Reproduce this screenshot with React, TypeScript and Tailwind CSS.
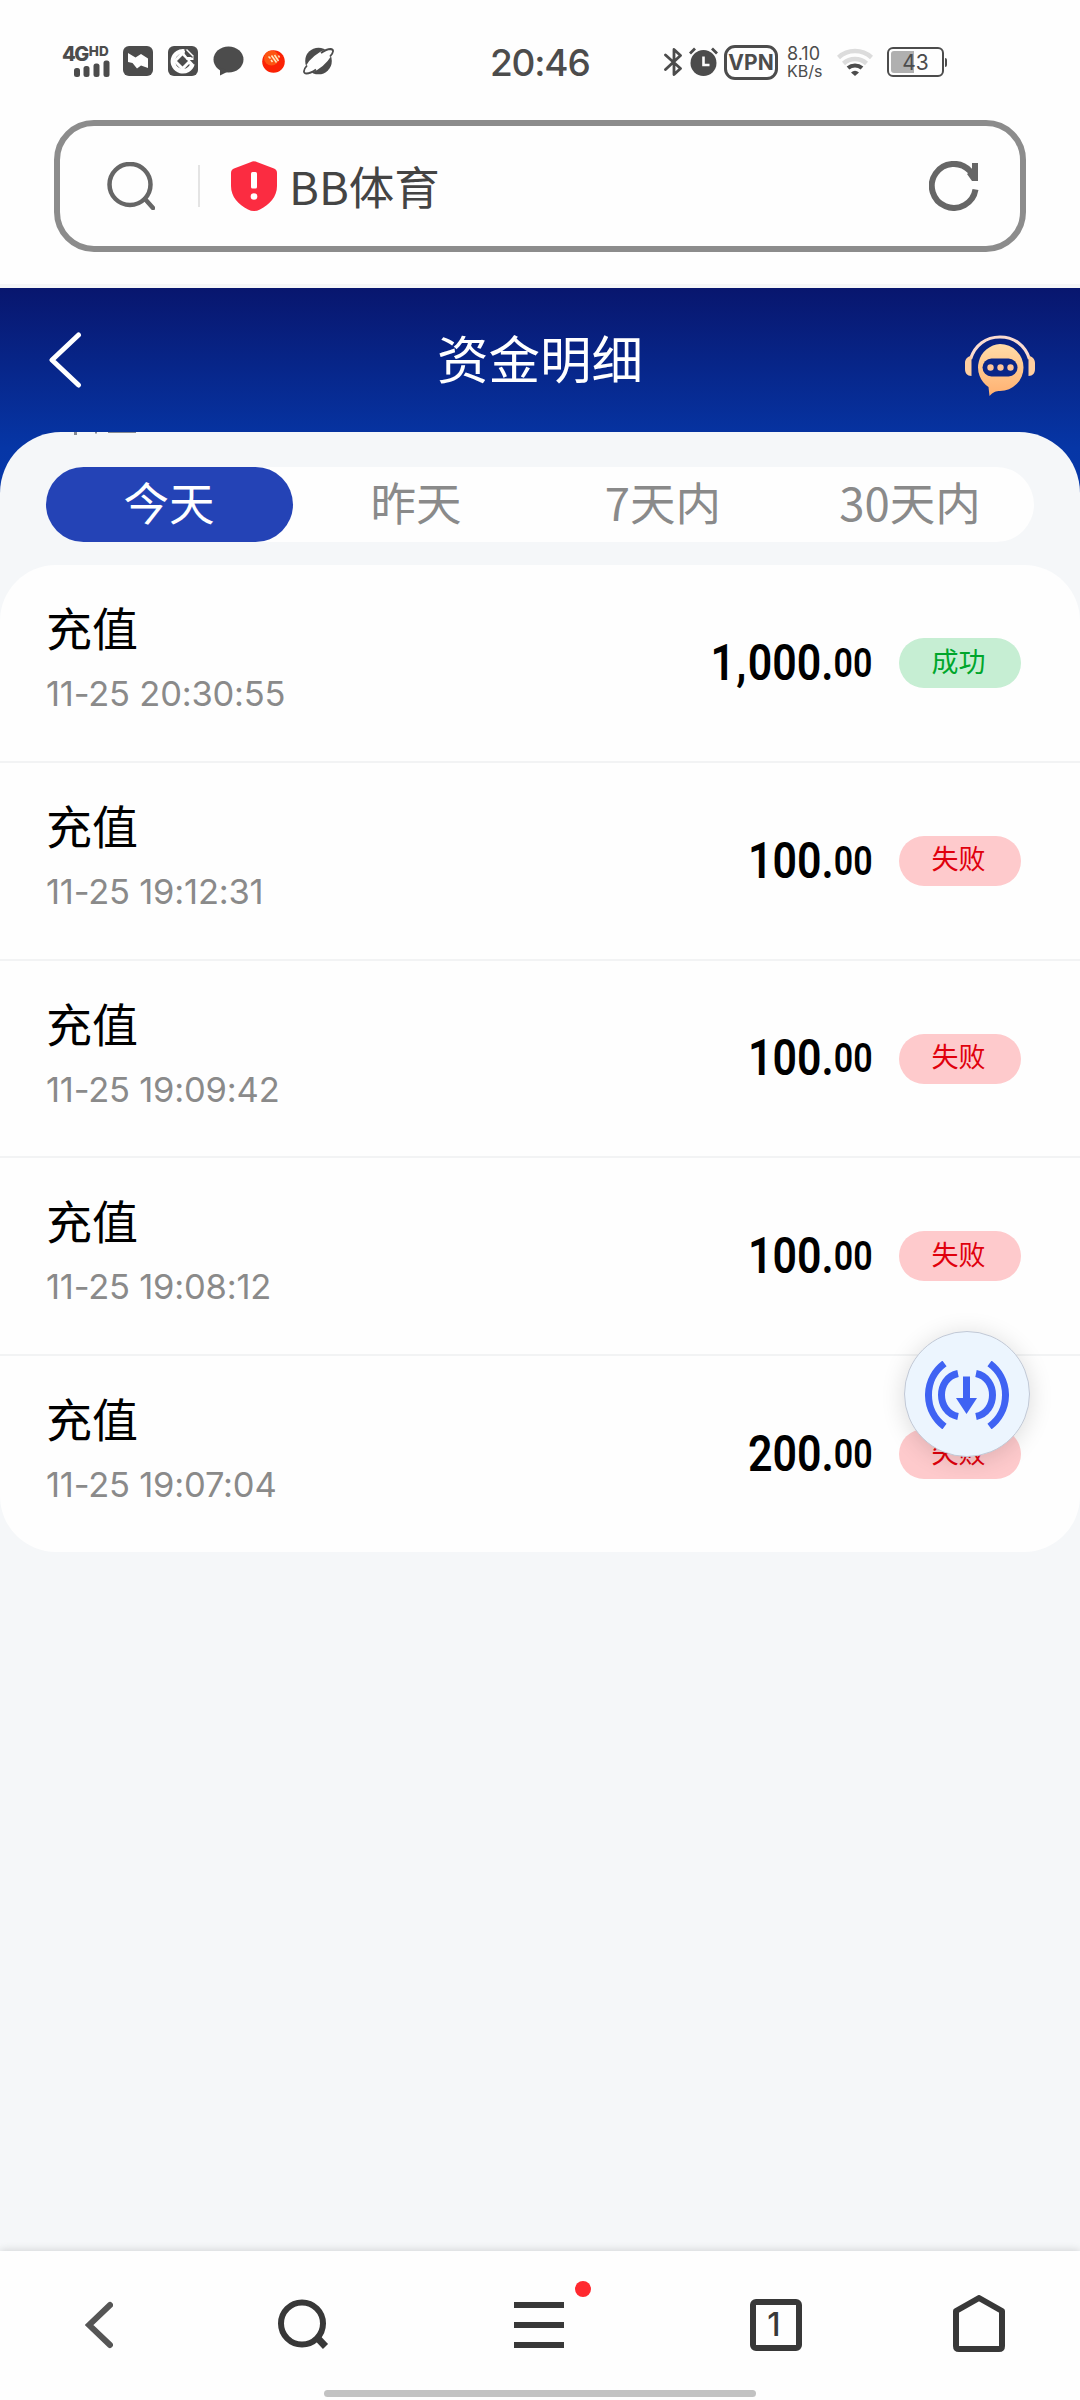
import { useState } from 'react';
import { clsx } from 'clsx';

type RecordStatus = 'success' | 'failed';

interface FundRecord {
  id: number;
  title: string;
  time: string;
  whole: string;
  cents: string;
  status: RecordStatus;
}

const records: FundRecord[] = [
  { id: 1, title: '充值', time: '11-25 20:30:55', whole: '1,000', cents: '00', status: 'success' },
  { id: 2, title: '充值', time: '11-25 19:12:31', whole: '100', cents: '00', status: 'failed' },
  { id: 3, title: '充值', time: '11-25 19:09:42', whole: '100', cents: '00', status: 'failed' },
  { id: 4, title: '充值', time: '11-25 19:08:12', whole: '100', cents: '00', status: 'failed' },
  { id: 5, title: '充值', time: '11-25 19:07:04', whole: '200', cents: '00', status: 'failed' },
];

const ranges = ['今天', '昨天', '7天内', '30天内'];

function SignalIcon() {
  return (
    <div className="flex h-8 w-12 flex-col">
      <div className="flex h-[15px] items-start gap-px font-extrabold">
        <span className="text-[20px] leading-[18px] tracking-[-1.5px]">4G</span>
        <span className="text-[13.5px] leading-[12px]">HD</span>
      </div>
      <svg width="36" height="17" viewBox="0 0 36 17" className="ml-3" fill="currentColor">
        <rect x="0" y="8" width="6" height="9" rx="2.5" />
        <rect x="9.5" y="6" width="6" height="11" rx="2.5" />
        <rect x="19.5" y="3.5" width="6" height="13.5" rx="2.5" />
        <rect x="29.5" y="0.5" width="6" height="16.5" rx="2.5" />
      </svg>
    </div>
  );
}

function NotificationIcons() {
  return (
    <div className="flex items-center">
      <svg width="30" height="30" viewBox="0 0 30 30">
        <rect width="30" height="30" rx="6" fill="currentColor" />
        <path d="M5 7l7.5 4.5L18 8l7 4.5V22l-7-2.5-4 3-4.500-5.500-4.500-1z" fill="#fefefe" />
      </svg>
      <svg width="30" height="30" viewBox="0 0 30 30" className="ml-[15px]" fill="none">
        <rect width="30" height="30" rx="6" fill="currentColor" />
        <path d="M17 5.500A10 10 0 1 0 24.500 18" stroke="#fefefe" strokeWidth="4.500" />
        <path d="M14.500 5L5 15l9.500 10 6-6.500H26L20 12z" fill="#fefefe" />
        <path d="M14.500 9.500l5.500 5.500-5.500 5.500L9 15z" fill="currentColor" />
        <path d="M18.500 12.500h7" stroke="#fefefe" strokeWidth="3" />
        <path d="M16.500 3.500l8 8" stroke="currentColor" strokeWidth="1.300" />
        <path d="M18.500 3.500l7 7" stroke="#fefefe" strokeWidth="1.500" />
      </svg>
      <svg width="31" height="30" viewBox="0 0 31 30" className="ml-[15px]">
        <ellipse cx="15.500" cy="13.500" rx="15" ry="13" fill="currentColor" />
        <path d="M7 21v8.500l8-4z" fill="currentColor" />
      </svg>
      <svg width="23" height="23" viewBox="0 0 23 23" className="ml-[18px]">
        <circle cx="11.500" cy="11.500" r="11.300" fill="#fb2205" />
        <circle cx="9.500" cy="8" r="7.500" fill="#fd5512" />
        <path d="M6.500 6.500l2 2M9.500 5.500l5 7M12.500 5l4 6M16.500 5.500l1 2M9 10l1.500 2" stroke="#ffe9c4" strokeWidth="1.500" fill="none" />
      </svg>
      <svg width="31" height="28" viewBox="0 0 31 28" className="ml-[18px]" fill="none">
        <circle cx="15.500" cy="14" r="13.300" fill="currentColor" />
        <ellipse cx="15.500" cy="14" rx="17" ry="6.500" transform="rotate(-40 15.500 14)" fill="#fefefe" />
        <path
          d="M4 18.500C0 23 0 26.500 3.500 26.500c3 0 6-1.500 9.500-4M27 9.500c4-4.500 4-7 .5-7.500-3 0-6 1.500-9.500 4"
          stroke="currentColor"
          strokeWidth="1.800"
        />
      </svg>
    </div>
  );
}

function BluetoothIcon() {
  return (
    <svg width="19" height="30" viewBox="0 0 19 30" fill="none" stroke="currentColor" strokeWidth="2.800">
      <path d="M1.500 8l15 13.500L10 27.500V2.500l6.500 6L1.500 22.500" strokeLinejoin="round" strokeLinecap="round" />
    </svg>
  );
}

function AlarmIcon() {
  return (
    <svg width="29" height="30" viewBox="0 0 29 30" fill="none">
      <circle cx="14.500" cy="16" r="13" fill="currentColor" />
      <path d="M1 6.500l5-5M28 6.500l-5-5" stroke="currentColor" strokeWidth="2.800" />
      <path d="M14.500 9.500v8.500h6" stroke="#fefefe" strokeWidth="2.600" />
    </svg>
  );
}

function WifiIcon() {
  return (
    <svg width="36" height="28" viewBox="0 0 36 28" fill="none" strokeWidth="4.500">
      <path d="M1.500 9.500a24.500 24.500 0 0 1 33 0" stroke="#dcdcdc" />
      <path d="M6.500 15.500a17 17 0 0 1 23 0" stroke="#dcdcdc" />
      <path d="M11 20a11 11 0 0 1 14 0" stroke="currentColor" strokeWidth="4.200" />
      <path d="M14 24.500q4-3.500 8 0L18 28z" fill="currentColor" />
    </svg>
  );
}

function Battery({ level }: { level: number }) {
  return (
    <div className="flex items-center gap-px">
      <div className="relative flex h-[30px] w-[57px] items-center justify-center rounded-[6px] border-2 border-[#4c4c4c]">
        <div className="absolute inset-y-[2px] left-[2px] rounded-l-[3px] bg-[#b0b0b0]" style={{ width: `${level}%` }} />
        <span className="relative text-[21px] leading-none">{level}</span>
      </div>
      <div className="h-[9px] w-[2px] rounded-r bg-[#4c4c4c]" />
    </div>
  );
}

function StatusBar() {
  return (
    <div className="flex h-[120px] items-start pt-[44px] text-[#4c4c4c]">
      <div className="flex w-[429px] items-center pt-px pl-[62px]">
        <SignalIcon />
        <div className="ml-[13px]">
          <NotificationIcons />
        </div>
      </div>
      <div className="w-[235px] pl-[61px] text-[37px] leading-[37px] font-medium tracking-[-1.2px]">20:46</div>
      <div className="flex h-[36px] items-center">
        <BluetoothIcon />
        <div className="ml-[6px]">
          <AlarmIcon />
        </div>
        <div className="ml-[6px] flex h-[35px] w-[54px] items-center justify-center rounded-[11px] border-[3px] border-[#4c4c4c] text-[21px] leading-none font-bold">
          VPN
        </div>
        <div className="ml-[9px] w-[50px]">
          <div className="text-[18px] leading-[18px]">8.10</div>
          <div className="text-[16px] leading-[16px]">KB/s</div>
        </div>
        <WifiIcon />
        <div className="ml-[14px]">
          <Battery level={43} />
        </div>
      </div>
    </div>
  );
}

function AddressBar() {
  return (
    <div className="mx-[54px] flex h-[132px] items-center rounded-[40px] border-[6px] border-[#8c8c8c] pr-[41px] pl-[47px]">
      <svg width="48" height="48" viewBox="0 0 48 48" fill="none" stroke="#666" strokeWidth="4.500">
        <circle cx="23" cy="22.500" r="20.500" />
        <path d="M38 37l8 9" strokeLinecap="round" />
      </svg>
      <div className="ml-[43px] h-[42px] w-[2px] bg-[#e4e4e4]" />
      <svg width="46" height="50" viewBox="0 0 46 50" className="ml-[31px]">
        <path
          d="M19.500 1.200q3.500-1.700 7 0L43 7.500q3 1.200 3 4.500v13c0 11-7.500 18.500-17 23.500q-6 3-12 0C7.500 43.500 0 36 0 25V12q0-3.300 3-4.500z"
          fill="#fb2c41"
        />
        <rect x="20" y="11" width="6" height="16.500" rx="1.500" fill="#fff" />
        <circle cx="23" cy="35.500" r="3.300" fill="#fff" />
      </svg>
      <span className="ml-[12px] font-['Noto_Sans_CJK_SC',sans-serif] text-[45.5px] leading-none text-[#444]">BB体育</span>
      <svg width="50" height="50" viewBox="0 0 50 50" className="ml-auto" fill="none" stroke="#666" strokeWidth="6">
        <path d="M46.500 28.500A22 22 0 1 1 41 10l4 5" />
        <path d="M43 2h6v18h-6l-5-7 5-4z" fill="#666" stroke="none" />
      </svg>
    </div>
  );
}

function SupportIcon() {
  return (
    <svg width="70" height="62" viewBox="0 0 70 62" fill="none">
      <defs>
        <linearGradient id="support-fill" x1="0" y1="0" x2="0" y2="1">
          <stop offset="0" stopColor="#ffdca8" />
          <stop offset="1" stopColor="#ffb070" />
        </linearGradient>
      </defs>
      <path d="M5.500 24C10 10 21 2 35 2s25 8 29.500 22" stroke="#fbdcd0" strokeWidth="3.200" />
      <path d="M6.500 21v20C2 41 0 38 0 34v-6c0-4 3-7 6.500-7zM63.500 21v20c4.500 0 6.500-3 6.500-7v-6c0-4-3-7-6.500-7z" fill="#ffcfa0" />
      <path d="M35 9a23.500 23.500 0 0 1 0 47c-4 0-7 1-10.500 5l-1-9A23.500 23.500 0 0 1 35 9z" fill="url(#support-fill)" />
      <rect x="17.500" y="23.500" width="35" height="18" rx="9" fill="#0a2688" />
      <circle cx="25.500" cy="32.500" r="3.200" fill="#ffc698" />
      <circle cx="35.500" cy="32.500" r="3.200" fill="#ffc698" />
      <circle cx="45.500" cy="32.500" r="3.200" fill="#ffc698" />
    </svg>
  );
}

function PageHeader() {
  return (
    <header className="flex h-[144px] items-center justify-between pr-[45px] pl-[48px] text-white">
      <button type="button" aria-label="返回" className="w-[67px]">
        <svg width="34" height="56" viewBox="0 0 34 56" fill="none" stroke="currentColor" strokeWidth="5">
          <path d="M30.500 3L4 28l26.500 25" strokeLinecap="round" strokeLinejoin="round" />
        </svg>
      </button>
      <h1 className="pt-0.5 text-[51.5px] leading-none">资金明细</h1>
      <button type="button" aria-label="客服" className="mt-3">
        <SupportIcon />
      </button>
    </header>
  );
}

function RangeTabs() {
  const [active, setActive] = useState(0);

  return (
    <div role="tablist" className="mx-[46px] grid h-[75px] grid-cols-4 rounded-full bg-[#fefefe]">
      {ranges.map((range, index) => (
        <button
          key={range}
          type="button"
          role="tab"
          aria-selected={index === active}
          onClick={() => setActive(index)}
          className={clsx(
            "rounded-full pr-px pb-[5px] font-['Noto_Sans_CJK_SC',sans-serif] text-[45.5px] leading-none",
            index === active ? 'bg-[#2443b6] text-white' : 'text-[#8a8a8a]',
          )}
        >
          {range}
        </button>
      ))}
    </div>
  );
}

function Amount({ whole, cents }: { whole: string; cents: string }) {
  return (
    <div className="flex origin-right scale-x-85 items-baseline font-['Roboto',sans-serif] leading-none font-semibold text-black">
      <span className="text-[50.5px]">
        {whole.split('').map((char, index) => (
          <span key={index} className={char === ',' ? 'mx-[1.5px]' : ''}>
            {char}
          </span>
        ))}
        .
      </span>
      <span className="relative -top-[3px] text-[40px]">{cents}</span>
    </div>
  );
}

function StatusBadge({ status }: { status: RecordStatus }) {
  return (
    <span
      className={clsx(
        'flex h-[50px] w-[122px] items-center justify-center rounded-full pr-0.5 pb-[2px] text-[27px] leading-none',
        status === 'success' ? 'bg-[#c6eed3] text-[#00a62b]' : 'bg-[#fecacc] text-[#e0000c]',
      )}
    >
      {status === 'success' ? '成功' : '失败'}
    </span>
  );
}

function RecordRow({ record }: { record: FundRecord }) {
  return (
    <li className="flex h-[197.75px] justify-between border-b-[2px] border-[#f2f3f4] pr-[59.5px] pl-[46px] last:h-[196px] last:border-b-0">
      <div className="pt-[41px]">
        <div className="text-[46px] leading-[46px] text-black">{record.title}</div>
        <div className="mt-[22px] text-[34.5px] leading-[40px] tracking-[-0.2px] text-[#8a8a8a]">{record.time}</div>
      </div>
      <div className="mt-[73px] flex h-[50px] items-center gap-[26px] self-start">
        <Amount whole={record.whole} cents={record.cents} />
        <StatusBadge status={record.status} />
      </div>
    </li>
  );
}

function FloatingButton() {
  return (
    <button
      type="button"
      aria-label="下载"
      className="absolute top-[1331px] left-[904px] flex h-[126px] w-[126px] items-center justify-center rounded-full border border-[#c2c9d6] bg-[#ecf5fe] shadow-[0_3px_24px_rgba(0,0,0,0.14)]"
    >
      <svg width="84" height="68" viewBox="0 0 84 68" className="mt-0.5" fill="none" stroke="#3f63f3" strokeWidth="7">
        <path d="M19.500 2.500a39 39 0 0 0 0 63M64.500 2.500a39 39 0 0 1 0 63" />
        <path d="M33 12.500C11 17 11 51 33 55.500M51 12.500c22 4.500 22 38.500 0 43" />
        <path d="M38 15.500h7V37h7L41.500 53 31 37h7z" fill="#3f63f3" stroke="none" />
      </svg>
    </button>
  );
}

function BrowserNav() {
  return (
    <nav className="flex h-[149px] flex-col justify-between bg-[#fefefe] pb-[3px] shadow-[0_-1px_8px_rgba(0,0,0,0.14)]">
      <div className="flex items-start pt-[44px] pl-[85px] text-[#383838]">
        <svg width="28" height="58" viewBox="0 0 28 58" fill="none" stroke="#555" strokeWidth="6">
          <path d="M25 10L4 30l21 20" strokeLinecap="round" />
        </svg>
        <svg width="52" height="58" viewBox="0 0 52 58" className="ml-[165px]" fill="none" stroke="currentColor" strokeWidth="6">
          <circle cx="24" cy="28.500" r="21" />
          <path d="M39 42.500l8.500 9" strokeWidth="7" />
        </svg>
        <div className="relative ml-[184px] flex h-[53px] w-[50px] flex-col gap-[14px] pt-[7px]">
          <span className="h-[6px] bg-current" />
          <span className="h-[6px] bg-current" />
          <span className="h-[6px] bg-current" />
          <span className="absolute -top-[14px] -right-[27px] h-4 w-4 rounded-full bg-[#ff292f]" />
        </div>
        <div className="mt-1 ml-[186px] flex h-[52px] w-[52px] items-center justify-center rounded-[6px] border-[6px] border-current pr-1 text-[32px] leading-none font-medium">
          1
        </div>
        <svg width="52" height="57" viewBox="0 0 52 57" className="ml-[151px]" fill="none" stroke="currentColor" strokeWidth="6">
          <path d="M3 16L26 3l23 13v35q0 3-3 3H6q-3 0-3-3z" strokeLinejoin="round" />
        </svg>
      </div>
      <div className="mx-auto h-[7px] w-[432px] rounded-full bg-[#c2c2c2]" />
    </nav>
  );
}

export default function App() {
  return (
    <div className="relative flex h-[2400px] w-[1080px] flex-col overflow-hidden bg-[#fefefe] font-['Inter','Noto_Sans_CJK_SC',sans-serif]">
      <StatusBar />
      <AddressBar />
      <div className="mt-[32px] h-[4px] bg-[#f5f6f7]" />
      <main className="flex flex-1 flex-col bg-[linear-gradient(to_bottom,#08166e_0px,#0636a6_160px,#0639ab_220px)]">
        <PageHeader />
        <div className="flex-1 rounded-t-[61px] bg-[#f5f7f9]">
          {/* bottom edge of the filter label scrolled under the header */}
          <svg width="100" height="3" viewBox="0 0 100 3" className="ml-[46px] block" fill="#858991">
            <rect x="28" width="3" height="3" />
            <rect x="49" width="2" height="1.500" />
            <rect x="62" width="28" height="1" />
          </svg>
          <div className="pt-[32px]">
            <RangeTabs />
          </div>
          <ul className="mt-[23px] rounded-[56px] bg-[#fefefe]">
            {records.map(record => (
              <RecordRow key={record.id} record={record} />
            ))}
          </ul>
        </div>
      </main>
      <BrowserNav />
      <FloatingButton />
    </div>
  );
}
